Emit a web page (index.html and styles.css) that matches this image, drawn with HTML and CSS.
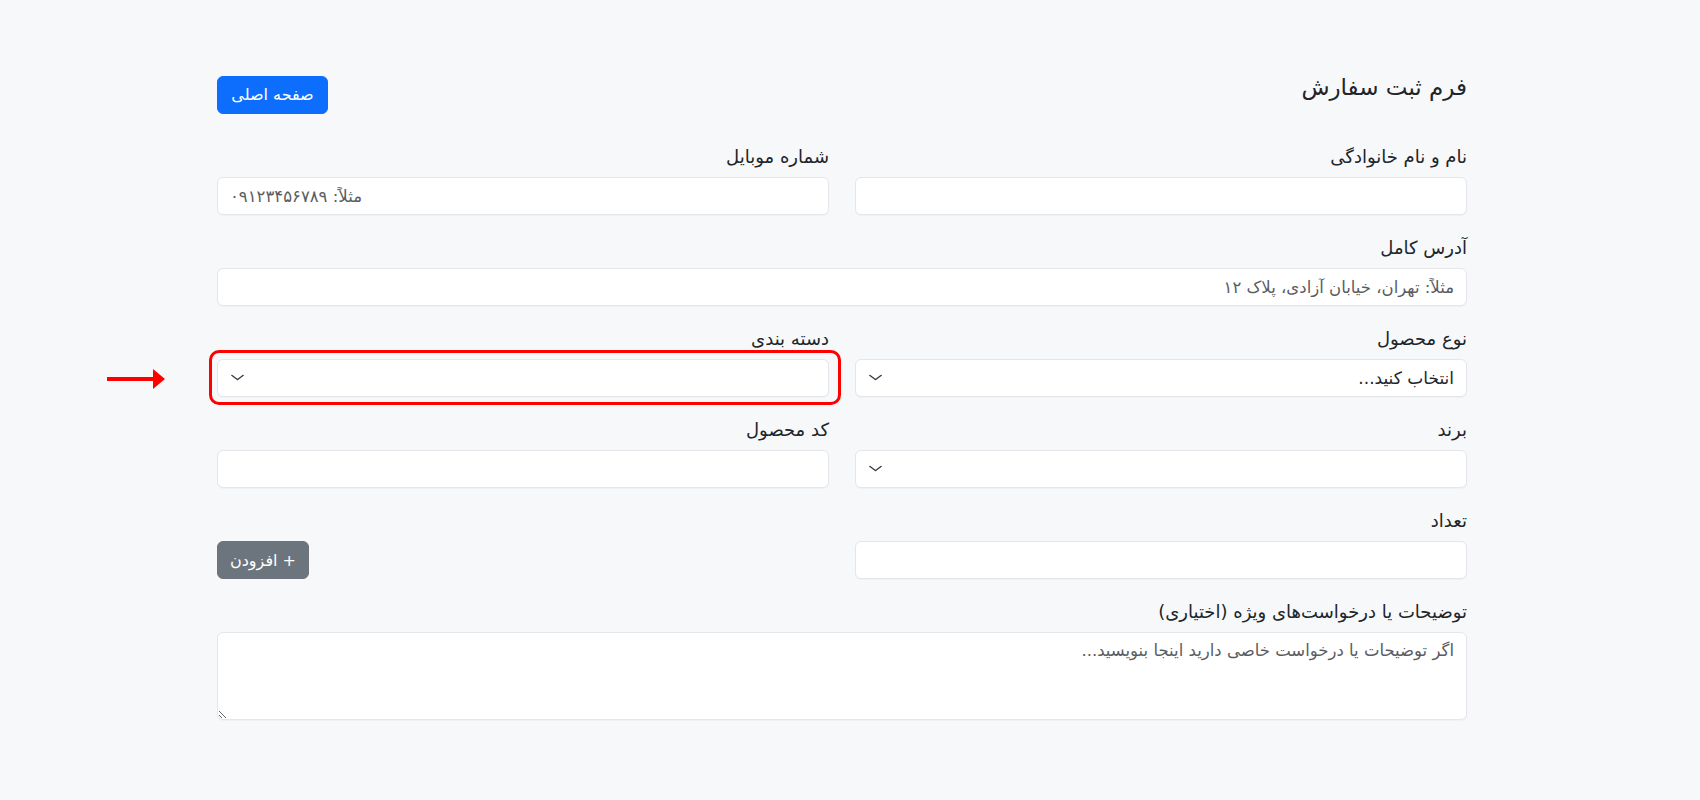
FILE: index.html
```html
<!DOCTYPE html>
<html lang="fa" dir="rtl">
<head>
<meta charset="utf-8">
<title>فرم ثبت سفارش</title>
<link rel="stylesheet" href="styles.css">
</head>
<body>
<div class="page">
  <div class="container">
    <header class="header">
      <h4 class="title">فرم ثبت سفارش</h4>
      <a class="btn btn-primary" href="#">صفحه اصلی</a>
    </header>

    <form class="form">
      <div class="field">
        <label class="label">نام و نام خانوادگی</label>
        <input class="control" type="text">
      </div>
      <div class="field">
        <label class="label">شماره موبایل</label>
        <input class="control ltr" type="text" dir="ltr" placeholder="مثلاً: ۰۹۱۲۳۴۵۶۷۸۹">
      </div>

      <div class="field full">
        <label class="label">آدرس کامل</label>
        <input class="control" type="text" placeholder="مثلاً: تهران، خیابان آزادی، پلاک ۱۲">
      </div>

      <div class="field">
        <label class="label">نوع محصول</label>
        <div class="select-wrap">
          <select class="control select"><option>انتخاب کنید...</option></select>
          <svg class="chevron" viewBox="0 0 16 16" width="16" height="12" preserveAspectRatio="none"><path d="m2 5 6 6 6-6" fill="none" stroke="#343a40" stroke-width="1.7" stroke-linecap="round" stroke-linejoin="round"/></svg>
        </div>
      </div>
      <div class="field">
        <label class="label">دسته بندی</label>
        <div class="select-wrap highlighted">
          <select class="control select"><option></option></select>
          <svg class="chevron" viewBox="0 0 16 16" width="16" height="12" preserveAspectRatio="none"><path d="m2 5 6 6 6-6" fill="none" stroke="#343a40" stroke-width="1.7" stroke-linecap="round" stroke-linejoin="round"/></svg>
          <span class="highlight-box"></span>
        </div>
      </div>

      <div class="field">
        <label class="label">برند</label>
        <div class="select-wrap">
          <select class="control select"><option></option></select>
          <svg class="chevron" viewBox="0 0 16 16" width="16" height="12" preserveAspectRatio="none"><path d="m2 5 6 6 6-6" fill="none" stroke="#343a40" stroke-width="1.7" stroke-linecap="round" stroke-linejoin="round"/></svg>
        </div>
      </div>
      <div class="field">
        <label class="label">کد محصول</label>
        <input class="control" type="text">
      </div>

      <div class="field">
        <label class="label">تعداد</label>
        <input class="control" type="number">
      </div>
      <div class="field bottom">
        <button class="btn btn-secondary" type="button">+ افزودن</button>
      </div>

      <div class="field full">
        <label class="label">توضیحات یا درخواست‌های ویژه (اختیاری)</label>
        <textarea class="control textarea" rows="3" placeholder="اگر توضیحات یا درخواست خاصی دارید اینجا بنویسید..."></textarea>
      </div>
    </form>
  </div>

  <svg class="pointer-arrow" width="62" height="22" viewBox="0 0 62 22">
    <rect x="2" y="9" width="48" height="4" fill="#ff0000"/>
    <polygon points="48,1 60,11 48,21" fill="#ff0000"/>
  </svg>
</div>
</body>
</html>
```

FILE: styles.css
```css
* {
  box-sizing: border-box;
}

html, body {
  margin: 0;
  padding: 0;
}

body {
  background: #f7f8fa;
  color: #212529;
  font-family: "DejaVu Sans", "Noto Sans", sans-serif;
  font-size: 16px;
  line-height: 1.5;
  min-height: 800px;
}

.page {
  position: relative;
  padding: 76px 16px 40px 0;
}

.container {
  width: 1250px;
  margin: 0 auto;
}

.header {
  display: flex;
  align-items: center;
  justify-content: space-between;
  height: 38px;
  margin-bottom: 31px;
}

.title {
  margin: -14px 0 0 0;
  font-size: 23px;
  font-weight: normal;
  line-height: 1.2;
  color: #212529;
}

.btn {
  display: inline-flex;
  align-items: center;
  justify-content: center;
  height: 38px;
  padding: 0 12px;
  border: 1px solid transparent;
  border-radius: 6px;
  font-family: inherit;
  font-size: 16px;
  color: #fff;
  text-decoration: none;
  cursor: pointer;
}

.btn-primary {
  background: #0d6efd;
  border-color: #0d6efd;
  width: 111px;
}

.btn-secondary {
  background: #6c757d;
  border-color: #6c757d;
  width: 92px;
}

.form {
  display: grid;
  grid-template-columns: 612px 612px;
  column-gap: 26px;
  row-gap: 21px;
}

.field {
  display: flex;
  flex-direction: column;
}

.field.full {
  grid-column: 1 / -1;
}

.field.bottom {
  justify-content: flex-end;
  align-items: flex-end;
}

.label {
  display: block;
  height: 24px;
  line-height: 24px;
  margin-bottom: 8px;
  font-size: 18px;
  color: #212529;
}

.control {
  display: block;
  width: 100%;
  height: 38px;
  padding: 6px 12px;
  border: 1px solid #e4e6ea;
  border-radius: 6px;
  background: #fff;
  box-shadow: 0 1px 1px rgba(0, 0, 0, 0.03);
  font-family: inherit;
  font-size: 16.5px;
  line-height: 24px;
  color: #212529;
  outline: none;
}

.control::placeholder {
  color: #595c5f;
  opacity: 1;
}

.control.ltr {
  text-align: left;
}

.select-wrap {
  position: relative;
}

.select {
  appearance: none;
  -webkit-appearance: none;
  padding-left: 36px;
  font-size: 17px;
}

.chevron {
  position: absolute;
  left: 13px;
  top: 13px;
  width: 15px;
  height: 11px;
  pointer-events: none;
}

.highlight-box {
  position: absolute;
  top: -9px;
  bottom: -8px;
  left: -8px;
  right: -12px;
  border: 3px solid #ff0000;
  border-radius: 10px;
  pointer-events: none;
}

.textarea {
  height: 88px;
  resize: vertical;
}

.pointer-arrow {
  position: absolute;
  left: 105px;
  top: 368px;
}
```
